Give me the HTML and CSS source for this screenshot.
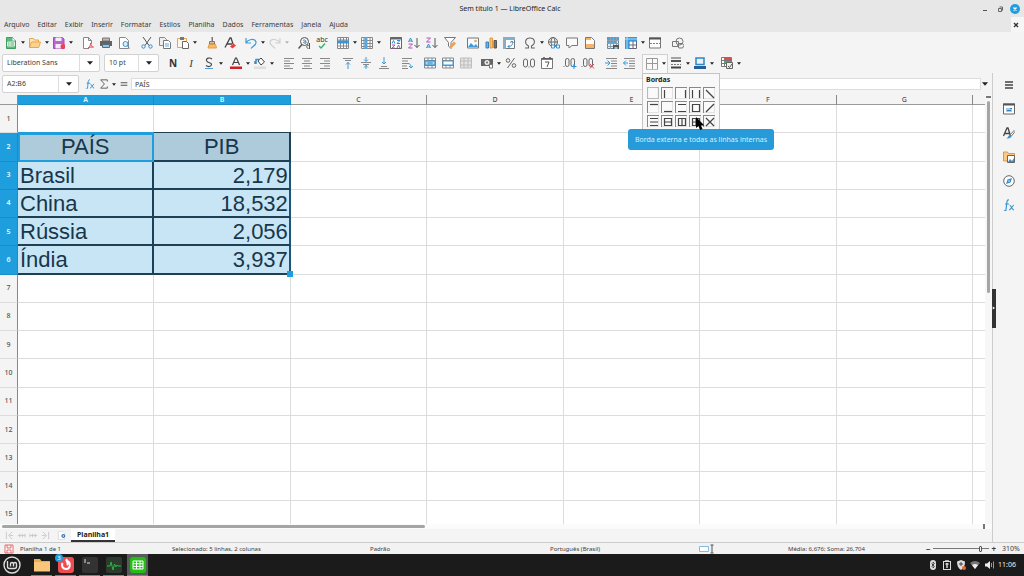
FILE: index.html
```html
<!DOCTYPE html>
<html lang="pt-BR">
<head>
<meta charset="utf-8">
<title>Sem título 1 — LibreOffice Calc</title>
<link rel="stylesheet" href="styles.css">
</head>
<body>
<svg class="sprite" aria-hidden="true">
  <symbol id="new" viewBox="0 0 12 12"><path d="M1.500.5h6l3 3v8h-9z" fill="#5fb97c" stroke="#3f9e60"/><path d="M7.500.5v3h3z" fill="#fff"/><path d="M2.500 5h7v4h-7zM2.500 7h7M5 5v4" fill="#5fb97c" stroke="#d9f2e1"/></symbol>
  <symbol id="open" viewBox="0 0 12 12"><path d="M.5 10.500v-9h4l1 1.500h4v2" fill="#fbe3b8" stroke="#e7a64a"/><path d="M.5 10.500 2.500 5h9l-1.800 5.500z" fill="#fbd38d" stroke="#eba750"/></symbol>
  <symbol id="save" viewBox="0 0 12 12"><path d="M.5.5h9l1.500 1.500v9.500H.5z" fill="#b867cd" stroke="#9b51b5"/><path d="M2.500.5h6v3.500h-6zM2.500 7h6v4.500h-6z" fill="#f5eaf8"/><circle cx="10" cy="9.500" r="2.500" fill="#ec4358"/></symbol>
  <symbol id="pdf" viewBox="0 0 12 12"><path d="M7 11.500H1.500V.5h5l3 3V7M6.500.5v3h3" fill="#fff" stroke="#888"/><path d="M6 11c2-1 2.500-3 2.500-5 .5 3 1.500 4 3 4-2 0-3.500 0-5.500 1z" fill="none" stroke="#e5484d"/></symbol>
  <symbol id="print" viewBox="0 0 12 12"><path d="M2.500 1h7v3h-7z" fill="#b8b8b8" stroke="#777"/><path d="M0 4h12v5H0z" fill="#636363"/><path d="M2.500 7.500h7v3h-7z" fill="#8ec8ee" stroke="#5d6c77"/></symbol>
  <symbol id="preview" viewBox="0 0 12 12"><path d="M1.500 11.500V.5h6l3 3v8z" fill="#fff" stroke="#888"/><circle cx="7.500" cy="7" r="2.500" fill="#dceefb" stroke="#3e94d1"/><path d="m9.500 9 2 2.500" stroke="#3e94d1"/></symbol>
  <symbol id="cut" viewBox="0 0 12 12" fill="none"><path d="m2 0 6 8.500M10 0 4 8.500" stroke="#555"/><circle cx="2.500" cy="9.500" r="1.700" stroke="#338bcf"/><circle cx="9.500" cy="9.500" r="1.700" stroke="#338bcf"/></symbol>
  <symbol id="copy" viewBox="0 0 12 12"><path d="M.5.5h5l2 2v6h-7z" fill="#eee" stroke="#888"/><path d="M4.500 3.500h5l2 2v6h-7z" fill="#fff" stroke="#777"/><path d="M6 7h4M6 9h4" stroke="#5ba9df"/></symbol>
  <symbol id="paste" viewBox="0 0 12 12"><path d="M.5 1.500h9v9h-9z" fill="#fff7e9" stroke="#e3a45b"/><path d="M3 0h4v3H3z" fill="#777"/><path d="M5.500 4.500h4l2 2v5h-6z" fill="#fff" stroke="#666"/></symbol>
  <symbol id="clone" viewBox="0 0 12 12"><path d="M5.500 0h1.500v4H5.500z" fill="#777"/><path d="M3.500 4.500h5V7h-5z" fill="#d8c0a2" stroke="#8d7760"/><path d="M3 7.500h6.500l1 3.500H2z" fill="#f9bd68" stroke="#e59a43"/></symbol>
  <symbol id="clear" viewBox="0 0 12 12"><path d="M1 10.500 6 1h1l2 6M3 7h5" fill="none" stroke="#444" stroke-width="1.300"/><path d="m6 9.500 3.500-3 2.500 2-3.500 3z" fill="#ec3d3d"/></symbol>
  <symbol id="undo" viewBox="0 0 12 12"><path d="M1 1v5h5M1 6c2-4 9-5 10-1 .5 3-3 4-5 6.500" fill="none" stroke="#409bd9" stroke-width="1.200"/></symbol>
  <symbol id="redo" viewBox="0 0 12 12"><path d="M11 1v5H6M11 6C9 2 2 1 1 5c-.5 3 3 4 5 6.500" fill="none" stroke="#d0d0d0" stroke-width="1.200"/></symbol>
  <symbol id="find" viewBox="0 0 12 12" fill="none"><circle cx="6.500" cy="4.500" r="4" stroke="#555"/><path d="M4 7.500.5 11.500" stroke="#555" stroke-width="1.500"/><path d="M5 3.500c2-1 3-.5 3 2.500-2 1-4-1-.5-1.500" stroke="#3c83bb"/><path d="M11.500 6v6M11.500 8.500c-3-1-4 2.500-1 3" stroke="#555"/></symbol>
  <symbol id="rowi" viewBox="0 0 12 12"><path d="M.5.5h11v11H.5zM.5 3h11M.5 9h11M3.500.5v11M6.500.5v11M9.500.5v11" fill="#fff" stroke="#888"/><path d="M0 3.500h12v3H0z" fill="#3d93d3"/></symbol>
  <symbol id="coli" viewBox="0 0 12 12"><path d="M.5.5h11v11H.5zM.5 3.500h11M.5 6.500h11M.5 9.500h11M3 .5v11M9 .5v11" fill="#fff" stroke="#888"/><path d="M3.500 0h3v12h-3z" fill="#57a8df"/></symbol>
  <symbol id="sort" viewBox="0 0 12 12"><path d="M.5.500h11v11H.5z" fill="#fff" stroke="#666"/><path d="M.5 1.500h11" stroke="#666" stroke-width="2"/><g fill="none"><path d="m2 6.500 1.500-3L5 6.500M7 3.500h3l-3 3h3" stroke="#368ed1"/><path d="M2 8h3l-3 3h3" stroke="#ac55b5"/><path d="m7 11 1.500-3 1.500 3" stroke="#ac55b5"/></g></symbol>
  <symbol id="az" viewBox="0 0 12 12" fill="none"><path d="M.5 5 2.500 1l2 4M1 4h3" stroke="#368ed1"/><path d="M.5 7h4l-4 4h4" stroke="#b653bd"/><path d="M9 1v9.500M6.500 8 9 10.500 11.500 8" stroke="#555"/></symbol>
  <symbol id="za" viewBox="0 0 12 12" fill="none"><path d="M.5 1h4l-4 4h4" stroke="#b653bd"/><path d="m.5 11 2-4 2 4M1 10h3" stroke="#368ed1"/><path d="M9 1v9.500M6.500 8 9 10.500 11.500 8" stroke="#555"/></symbol>
  <symbol id="filter" viewBox="0 0 12 12"><path d="M.5.5h11L7 5.500v6L4.500 9V5.500z" fill="#fff" stroke="#777"/><path d="m6 11 .5-3L10 4.500l2 2L8.500 10z" fill="#f2a04e"/></symbol>
  <symbol id="image" viewBox="0 0 12 12"><path d="M.5 1h11v10H.5z" fill="#f4faff" stroke="#777"/><circle cx="8.500" cy="4" r="1.300" fill="#efa352"/><path d="m1 10 3-4 3 3 2-2 2 3z" fill="#409bdc"/></symbol>
  <symbol id="chart" viewBox="0 0 12 12"><path d="M1 5h2.500v6H1z" fill="#65b3e8" stroke="#3686bd"/><path d="M5 1h2.500v10H5z" fill="#fbc16e" stroke="#e5993a"/><path d="M9 3.500h2.500V11H9z" fill="#777" stroke="#555"/></symbol>
  <symbol id="pivot" viewBox="0 0 12 12"><path d="M.5.5h11v11H.5z" fill="#fff" stroke="#777"/><path d="M0 0h12v3H0zM0 3h3v9H0z" fill="#87adc7"/><path d="M5 9.500c4 0 5-2 4-5M7 5.500 9 4l1.500 2M6.500 8 5 9.500 6.500 11" fill="none" stroke="#338ace"/></symbol>
  <symbol id="omega" viewBox="0 0 12 12"><path d="M1 11h3.500V9C-.5 6 1.500 1 6 1s6.500 5 1.500 8v2H11" fill="none" stroke="#666" stroke-width="1.100"/></symbol>
  <symbol id="link" viewBox="0 0 12 12" fill="none"><circle cx="5" cy="5" r="4.500" stroke="#666"/><ellipse cx="5" cy="5" rx="2" ry="4.500" stroke="#666"/><path d="M.5 5h9" stroke="#666"/><path d="M3.500 8h3v3h-3zM8.500 8h3v3h-3zM6 9.500h3" fill="#f4f4f4" stroke="#3994d7"/></symbol>
  <symbol id="comment" viewBox="0 0 12 12"><path d="M.5 1h11v7.500H6L3 11V8.500H.5z" fill="#fafafa" stroke="#777"/></symbol>
  <symbol id="header" viewBox="0 0 12 12"><path d="M1.500.5h6l3 3v8h-9z" fill="#fff" stroke="#777"/><path d="M2 1h5v2H2zM2 7h8v4H2z" fill="#f5b469"/></symbol>
  <symbol id="area" viewBox="0 0 12 12"><path d="M.5.5h11v11H.5z" fill="#e5eef4" stroke="#70808c"/><path d="M0 0h12v3H0zM0 3h9v4H0z" fill="#4f9fd8"/><path d="M0 3.500h12M0 6.500h12M0 9.500h12M3.500 0v12M6.500 0v12M9.500 0v12" stroke="#8fa0ad"/><path d="M6 8h6v4H6z" fill="#555"/><path d="M7.500 10h3v2h-3z" fill="#9cc7e3"/></symbol>
  <symbol id="freeze" viewBox="0 0 12 12"><path d="M.5.5h11v11H.5zM.5 4h11M.5 8h11M4 .5v11M8 .5v11" fill="#fff" stroke="#667"/><path d="M0 0h12v4H4v8H0z" fill="#3f96d5"/><path d="M0 2h12M2 0v12" stroke="#ace0ff"/></symbol>
  <symbol id="split" viewBox="0 0 12 12"><path d="M.5 1h11v10H.5z" fill="#fff" stroke="#777"/><path d="M0 1.500h12" stroke="#555" stroke-width="2"/><path d="M1 6.500h10" stroke="#3594dc" stroke-dasharray="2 1"/></symbol>
  <symbol id="shapes" viewBox="0 0 12 12" fill="none" stroke="#777"><circle cx="7.500" cy="4.500" r="3.500"/><path d="M.5 4.500h6v5h-6z"/><path d="m7 6.500 3.500 0 1.500 2-1.500 2.500H7L5.500 8.500z"/></symbol>

  <symbol id="strike" viewBox="0 0 12 12"><path d="M9 2C7 .5 3 .5 3.500 3.500S9 5 8.500 7.500 5 10 3 8.500" fill="none" stroke="#444" stroke-width="1.200"/><path d="M2 11.500h8" stroke="#4a9dda"/></symbol>
  <symbol id="fontcolor" viewBox="0 0 12 12"><path d="m2.500 8 3-7h1l3 7M4 5.500h4" fill="none" stroke="#444" stroke-width="1.200"/><path d="M0 9.500h12V12H0z" fill="#cf2027"/></symbol>
  <symbol id="fill" viewBox="0 0 12 12"><path d="m4 4 3-3 3.500 4L7 8z" fill="#fff" stroke="#444"/><path d="M2 7V2.500h4M1 7V4" fill="none" stroke="#3a8dcb" stroke-width="1.500"/><path d="M0 9.500h12V12H0z" fill="#dedede"/></symbol>
  <symbol id="left" viewBox="0 0 12 12"><path d="M1 1.500h10M1 4h6M1 6.500h10M1 9h6M1 11.500h9" stroke="#888"/></symbol>
  <symbol id="center" viewBox="0 0 12 12"><path d="M1 1.500h10M3 4h6M1 6.500h10M3 9h6M1 11.500h10" stroke="#888"/></symbol>
  <symbol id="right" viewBox="0 0 12 12"><path d="M1 1.500h10M5 4h6M1 6.500h10M5 9h6M1 11.500h10" stroke="#888"/></symbol>
  <symbol id="top" viewBox="0 0 12 12" fill="none"><path d="M1 1.500h10M3 3.500h6" stroke="#888"/><path d="M6 12V5M4 7.500 6 5.500l2 2" stroke="#389ada"/></symbol>
  <symbol id="middle" viewBox="0 0 12 12" fill="none"><path d="M1 5.500h10M3 7.500h6" stroke="#888"/><path d="M6 0v4M4 2.500l2 2 2-2M6 12V8M4 10.500l2-2 2 2" stroke="#389ada"/></symbol>
  <symbol id="bottom" viewBox="0 0 12 12" fill="none"><path d="M1 11.500h10M3 9.500h6" stroke="#888"/><path d="M6 0v7M4 5l2 2 2-2" stroke="#389ada"/></symbol>
  <symbol id="wrap" viewBox="0 0 12 12" fill="none"><path d="M1 1.500h10M1 4h6M1 9h5M1 11.500h6" stroke="#888"/><path d="M1 6.500h6c2 0 3 1 3 4M8 9l2 2 2-2" stroke="#4199d2"/></symbol>
  <symbol id="merge" viewBox="0 0 12 12"><path d="M.5 1h11v10H.5zM.5 3.500h11M.5 8.500h11M4 1v10M8 1v10" fill="#fff" stroke="#808a92"/><path d="M1 4h10v4H1z" fill="#a8dcfb" stroke="#3990cb"/><path d="M3 6h6M5 4.500v3M7 4.500v3" stroke="#5ba3d3"/></symbol>
  <symbol id="mergec" viewBox="0 0 12 12"><path d="M.5 1h11v10H.5zM.5 3.500h11M.5 8.500h11M4 1v10M8 1v10" fill="#fff" stroke="#888"/><path d="M1 4h10v4H1z" fill="#fff" stroke="#409bda"/></symbol>
  <symbol id="unmerge" viewBox="0 0 12 12"><path d="M.5 1h11v10H.5zM.5 4h11M.5 8h11M4 1v10M8 1v10" fill="#e4e4e4" stroke="#bdbdbd"/></symbol>
  <symbol id="money" viewBox="0 0 12 12"><path d="M0 2h12v7H0z" fill="#666"/><circle cx="6" cy="5.500" r="2.500" fill="#eee"/><circle cx="6" cy="5.500" r="1" fill="#666"/><path d="M8.500 7.500h3v3.500h-3z" fill="#fff" stroke="#777"/></symbol>
  <symbol id="percent" viewBox="0 0 12 12" fill="none" stroke="#666"><circle cx="3" cy="3.500" r="1.800"/><circle cx="9" cy="8.500" r="1.800"/><path d="M9.500 1 2.500 11"/></symbol>
  <symbol id="number" viewBox="0 0 12 12" fill="none" stroke="#666"><rect x=".5" y="2" width="4" height="8" rx="2"/><rect x="7.500" y="2" width="4" height="8" rx="2"/><path d="M5.500 10h1"/></symbol>
  <symbol id="date" viewBox="0 0 12 12"><path d="M.5 1.500h11v10H.5z" fill="#fff" stroke="#777"/><path d="M.5 2h11M3 0v2M9 0v2" stroke="#555" stroke-width="1.500"/><path d="M4 5h4L6 10" fill="none" stroke="#555"/></symbol>
  <symbol id="adddec" viewBox="0 0 14 12" fill="none"><g stroke="#666"><path d="M.5 9.500h1"/><rect x="2.500" y="1.500" width="3.500" height="8" rx="1.700"/><rect x="8" y="1.500" width="3.500" height="8" rx="1.700"/></g><path d="M8.500 9.500h5M11 7v5" stroke="#298fda"/></symbol>
  <symbol id="deldec" viewBox="0 0 14 12" fill="none"><g stroke="#666"><path d="M.5 9.500h1"/><rect x="2.500" y="1.500" width="3.500" height="8" rx="1.700"/><rect x="8" y="1.500" width="3.500" height="8" rx="1.700"/></g><path d="m9 7 4 4.500m0-4.500-4 4.500" stroke="#e83f4c"/></symbol>
  <symbol id="indent" viewBox="0 0 12 12" fill="none"><path d="M1 1.500h11M6 4h6M6 6.500h6M6 9h6M1 11.500h11" stroke="#888"/><path d="M0 6h4.500M2.500 3.500 5 6 2.500 8.500" stroke="#3598dc"/></symbol>
  <symbol id="outdent" viewBox="0 0 12 12" fill="none"><path d="M1 1.500h11M6 4h6M6 6.500h6M6 9h6M1 11.500h11" stroke="#888"/><path d="M5 6H.5M3 3.500.5 6 3 8.500" stroke="#3598dc"/></symbol>
  <symbol id="borders" viewBox="0 0 12 12" fill="none"><path d="M.5 11V.5h11V11M6.500 1v10M.5 5.500h11" stroke="#999"/><path d="M0 11.500h12" stroke="#f3ad69"/></symbol>
  <symbol id="style" viewBox="0 0 12 12"><path d="M1 1h10" stroke="#555"/><path d="M1 4h10" stroke="#555" stroke-width="2"/><path d="M1 7.500h10" stroke="#777" stroke-dasharray="2 1"/><path d="M1 10.500h10" stroke="#444" stroke-width="2"/></symbol>
  <symbol id="linecolor" viewBox="0 0 12 12"><path d="M2 1h8v6.500H2z" fill="#e7f4fd" stroke="#2e85c3" stroke-width="1.500"/><path d="M0 9h12v3H0z" fill="#245f98"/></symbol>
  <symbol id="cond" viewBox="0 0 12 12"><path d="M.5.5h10v9H.5zM.5 3.500h10M.5 6.500h10M3.500.5v9" fill="#fff" stroke="#777"/><path d="M3 1h7v2H3z" fill="#df4c4c"/><path d="M3 4h7v2H3z" fill="#3ead6e"/><path d="M5.500 5.500h6v6h-6z" fill="#eee" stroke="#666"/><path d="m7 9 1.500 1.500L11 7" fill="none" stroke="#555"/></symbol>

  <symbol id="tri" viewBox="0 0 6 4"><path d="M0 .3h6L3 3.800z" fill="#222"/></symbol>
  <symbol id="fx" viewBox="0 0 12 12"><path d="M6 1C3.500.5 4 3 3 11c-.3 1-1.500 1-2 .5M2 5h4M6.500 6c1.500 0 2.500 5 4.500 5M11 6c-1.500 0-3 5-5 5" fill="none" stroke="#3d96d4" stroke-width="1.200"/></symbol>
  <symbol id="sum" viewBox="0 0 12 12"><path d="M10 3V1H2l4.500 5L2 11h8V9" fill="none" stroke="#666" stroke-width="1.200"/></symbol>
  <symbol id="props" viewBox="0 0 12 12"><path d="M.5 1h11v10H.5z" fill="#fff" stroke="#666"/><path d="M0 1.500h12" stroke="#555" stroke-width="2"/><path d="M3 5h6v4H3z" fill="#a4ccea"/><path d="M4 7.500h4M7 5.500h2" stroke="#357eb5"/></symbol>
  <symbol id="styles" viewBox="0 0 12 12"><path d="M.5 9 4 1h1l2.500 8M2 6.500h4.500" fill="none" stroke="#444" stroke-width="1.300"/><path d="m7 8 4-4.500 1 1L8.500 9z" fill="#fff" stroke="#777"/><path d="M3 11.500c2 0 2-3 4-3.500l1.500 1.500c-1 2-3 2-5.500 2z" fill="#368fd0"/></symbol>
  <symbol id="gallery" viewBox="0 0 12 12"><path d="M.5 10V1h4l1 1.500h6V10z" fill="#fbc987" stroke="#e39743"/><path d="M4.500 4.500h7v7h-7z" fill="#fff" stroke="#666"/><path d="m5 11 2-3 2 2 2-3v4z" fill="#3690d1"/></symbol>
  <symbol id="compass" viewBox="0 0 12 12"><circle cx="6" cy="6" r="5.300" fill="#fff" stroke="#666"/><path d="m3 9 1.500-4.500L9 3 7.500 7.500z" fill="#338fd3"/><circle cx="6" cy="6" r=".7" fill="#fff"/></symbol>
  <symbol id="menu" viewBox="0 0 12 12"><path d="M2 3h8M2 6h8M2 9h8" stroke="#444" stroke-width="1.500"/></symbol>
</svg>

<header class="titlebar">
  <h1 class="title">Sem título 1 — LibreOffice Calc</h1>
  <div class="window-buttons">
    <button class="win" aria-label="Minimizar"><svg viewBox="0 0 10 10"><path d="M3 6.500h4" stroke="#555"/></svg></button>
    <button class="win" aria-label="Restaurar"><svg viewBox="0 0 10 10"><path d="M3.500 4.500h3v3h-3zM4.500 3h3v3.500" fill="none" stroke="#666"/></svg></button>
    <button class="win" aria-label="Fechar"><svg viewBox="0 0 10 10"><circle cx="5" cy="5" r="5" fill="#1f9ede"/><path d="m3.500 3.500 3 3m0-3-3 3" stroke="#fff" stroke-width="1.400"/></svg></button>
  </div>
</header>
<nav class="menubar">
  <button>Arquivo</button><button>Editar</button><button>Exibir</button><button>Inserir</button><button>Formatar</button><button>Estilos</button><button>Planilha</button><button>Dados</button><button>Ferramentas</button><button>Janela</button><button>Ajuda</button>
  <button class="doc-close" aria-label="Fechar documento"><svg viewBox="0 0 6 6"><path d="m1 1 4 4m0-4L1 5" stroke="#333" stroke-width="1.400"/></svg></button>
</nav>

<div class="toolbar standard">
  <button class="tool" aria-label="Novo"><svg><use href="#new"/></svg></button><button class="drop" aria-label="Mais"><svg><use href="#tri"/></svg></button>
  <button class="tool" aria-label="Abrir"><svg><use href="#open"/></svg></button><button class="drop" aria-label="Mais"><svg><use href="#tri"/></svg></button>
  <button class="tool" aria-label="Salvar"><svg><use href="#save"/></svg></button><button class="drop" aria-label="Mais"><svg><use href="#tri"/></svg></button>
  <i class="sep"></i>
  <button class="tool" aria-label="PDF"><svg><use href="#pdf"/></svg></button>
  <button class="tool" aria-label="Imprimir"><svg><use href="#print"/></svg></button>
  <button class="tool" aria-label="Visualizar"><svg><use href="#preview"/></svg></button>
  <i class="sep"></i>
  <button class="tool" aria-label="Cortar"><svg><use href="#cut"/></svg></button>
  <button class="tool" aria-label="Copiar"><svg><use href="#copy"/></svg></button>
  <button class="tool" aria-label="Colar"><svg><use href="#paste"/></svg></button><button class="drop" aria-label="Mais"><svg><use href="#tri"/></svg></button>
  <i class="sep"></i>
  <button class="tool" aria-label="Clonar"><svg><use href="#clone"/></svg></button>
  <button class="tool" aria-label="Limpar"><svg><use href="#clear"/></svg></button>
  <i class="sep small"></i>
  <button class="tool" aria-label="Desfazer"><svg><use href="#undo"/></svg></button><button class="drop" aria-label="Mais"><svg><use href="#tri"/></svg></button>
  <button class="tool" aria-label="Refazer"><svg><use href="#redo"/></svg></button><button class="drop faded" aria-label="Mais"><svg><use href="#tri"/></svg></button>
  <i class="sep"></i>
  <button class="tool" aria-label="Localizar"><svg><use href="#find"/></svg></button>
  <button class="tool spell" aria-label="Ortografia"><span>abc</span><svg viewBox="0 0 8 6"><path d="m1 3 2 2 4-4.500" fill="none" stroke="#38b567" stroke-width="1.400"/></svg></button>
  <i class="sep small"></i>
  <button class="tool" aria-label="Linha"><svg><use href="#rowi"/></svg></button><button class="drop" aria-label="Mais"><svg><use href="#tri"/></svg></button>
  <button class="tool" aria-label="Coluna"><svg><use href="#coli"/></svg></button><button class="drop" aria-label="Mais"><svg><use href="#tri"/></svg></button>
  <i class="sep"></i>
  <button class="tool" aria-label="Ordenar"><svg><use href="#sort"/></svg></button>
  <button class="tool" aria-label="Crescente"><svg><use href="#az"/></svg></button>
  <button class="tool" aria-label="Decrescente"><svg><use href="#za"/></svg></button>
  <button class="tool" aria-label="Filtro"><svg><use href="#filter"/></svg></button>
  <i class="sep"></i>
  <button class="tool" aria-label="Imagem"><svg><use href="#image"/></svg></button>
  <button class="tool" aria-label="Gráfico"><svg><use href="#chart"/></svg></button>
  <button class="tool" aria-label="Tabela dinâmica"><svg><use href="#pivot"/></svg></button>
  <i class="sep small"></i>
  <button class="tool" aria-label="Símbolo"><svg><use href="#omega"/></svg></button><button class="drop" aria-label="Mais"><svg><use href="#tri"/></svg></button>
  <button class="tool" aria-label="Hiperlink"><svg><use href="#link"/></svg></button>
  <button class="tool" aria-label="Comentário"><svg><use href="#comment"/></svg></button>
  <button class="tool" aria-label="Cabeçalho"><svg><use href="#header"/></svg></button>
  <i class="sep"></i>
  <button class="tool" aria-label="Área de impressão"><svg><use href="#area"/></svg></button>
  <button class="tool" aria-label="Fixar"><svg><use href="#freeze"/></svg></button><button class="drop" aria-label="Mais"><svg><use href="#tri"/></svg></button>
  <button class="tool" aria-label="Dividir"><svg><use href="#split"/></svg></button>
  <i class="sep"></i>
  <button class="tool" aria-label="Formas"><svg><use href="#shapes"/></svg></button>
</div>

<div class="toolbar">
  <div class="combo font-name"><input aria-label="Nome da fonte" value="Liberation Sans"><button aria-label="Abrir lista"><svg><use href="#tri"/></svg></button></div>
  <div class="combo font-size"><input aria-label="Tamanho da fonte" value="10 pt"><button aria-label="Abrir lista"><svg><use href="#tri"/></svg></button></div>
  <i class="sep"></i>
  <button class="tool bold">N</button>
  <button class="tool italic">I</button>
  <button class="tool" aria-label="Sublinhado"><svg><use href="#strike"/></svg></button><button class="drop" aria-label="Mais"><svg><use href="#tri"/></svg></button>
  <i class="sep small"></i>
  <button class="tool" aria-label="Cor da fonte"><svg><use href="#fontcolor"/></svg></button><button class="drop" aria-label="Mais"><svg><use href="#tri"/></svg></button>
  <button class="tool" aria-label="Cor de fundo"><svg><use href="#fill"/></svg></button><button class="drop" aria-label="Mais"><svg><use href="#tri"/></svg></button>
  <i class="sep"></i>
  <button class="tool" aria-label="Esquerda"><svg><use href="#left"/></svg></button>
  <button class="tool" aria-label="Centro"><svg><use href="#center"/></svg></button>
  <button class="tool" aria-label="Direita"><svg><use href="#right"/></svg></button>
  <i class="sep"></i>
  <button class="tool" aria-label="Em cima"><svg><use href="#top"/></svg></button>
  <button class="tool" aria-label="No meio"><svg><use href="#middle"/></svg></button>
  <button class="tool" aria-label="Embaixo"><svg><use href="#bottom"/></svg></button>
  <i class="sep"></i>
  <button class="tool" aria-label="Quebrar texto"><svg><use href="#wrap"/></svg></button>
  <i class="sep"></i>
  <button class="tool" aria-label="Mesclar e centralizar"><svg><use href="#merge"/></svg></button>
  <button class="tool" aria-label="Mesclar"><svg><use href="#mergec"/></svg></button>
  <button class="tool" aria-label="Desfazer mescla"><svg><use href="#unmerge"/></svg></button>
  <i class="sep small"></i>
  <button class="tool" aria-label="Moeda"><svg><use href="#money"/></svg></button><button class="drop" aria-label="Mais"><svg><use href="#tri"/></svg></button>
  <button class="tool" aria-label="Porcentagem"><svg><use href="#percent"/></svg></button>
  <button class="tool" aria-label="Número"><svg><use href="#number"/></svg></button>
  <button class="tool" aria-label="Data"><svg><use href="#date"/></svg></button>
  <i class="sep"></i>
  <button class="tool wide" aria-label="Adicionar casa decimal"><svg><use href="#adddec"/></svg></button>
  <button class="tool wide" aria-label="Excluir casa decimal"><svg><use href="#deldec"/></svg></button>
  <i class="sep"></i>
  <button class="tool" aria-label="Aumentar recuo"><svg><use href="#indent"/></svg></button>
  <button class="tool" aria-label="Diminuir recuo"><svg><use href="#outdent"/></svg></button>
  <i class="sep"></i>
  <div class="border-control">
    <button class="tool" aria-label="Bordas"><svg><use href="#borders"/></svg></button><button class="drop" aria-label="Mais"><svg><use href="#tri"/></svg></button>
    <section class="popup">
      <h2 class="popup-title">Bordas</h2>
      <div class="presets">
        <button aria-label="Sem bordas"><svg viewBox="0 0 12 12"><path d="M.5.5h11v11H.5z" stroke-dasharray="1 1" stroke="#777"/></svg></button>
        <button class="bev" aria-label="Esquerda"><svg viewBox="0 0 12 12"><path d="M3.500 3v8"/></svg></button>
        <button class="bev" aria-label="Direita"><svg viewBox="0 0 12 12"><path d="M10.500 3v8"/></svg></button>
        <button class="bev" aria-label="Esquerda e direita"><svg viewBox="0 0 12 12"><path d="M3.500 3v8M10.500 3v8"/></svg></button>
        <button class="bev" aria-label="Diagonal para baixo"><svg viewBox="0 0 12 12"><path d="m3 3 8 8"/></svg></button>
        <button class="bev" aria-label="Superior"><svg viewBox="0 0 12 12"><path d="M3 3.500h8"/></svg></button>
        <button class="bev" aria-label="Inferior"><svg viewBox="0 0 12 12"><path d="M3 10.500h8"/></svg></button>
        <button class="bev" aria-label="Superior e inferior"><svg viewBox="0 0 12 12"><path d="M3 3.500h8M3 10.500h8"/></svg></button>
        <button class="bev" aria-label="Externa"><svg viewBox="0 0 12 12"><path d="M3.500 3.500h7v7h-7z"/></svg></button>
        <button class="bev" aria-label="Diagonal para cima"><svg viewBox="0 0 12 12"><path d="m3 11 8-8"/></svg></button>
        <button class="bev" aria-label="Horizontais"><svg viewBox="0 0 12 12"><path d="M3 3.500h8M3 7h8M3 10.500h8"/></svg></button>
        <button class="bev" aria-label="Externa e horizontais"><svg viewBox="0 0 12 12"><path d="M3.500 3.500h7v7h-7zM3 7h8"/></svg></button>
        <button class="bev" aria-label="Externa e verticais"><svg viewBox="0 0 12 12"><path d="M3.500 3.500h7v7h-7zM7 3v8"/></svg></button>
        <button class="bev" aria-label="Externa e internas"><svg viewBox="0 0 12 12"><path d="M3.500 3.500h7v7h-7zM7 3v8M3 7h8"/></svg></button>
        <button class="bev" aria-label="Cruzada"><svg viewBox="0 0 12 12"><path d="m3 3 8 8M3 11l8-8"/></svg></button>
      </div>
      <svg class="pointer" viewBox="0 0 10 14"><path d="M1 0v11l2.500-2L5 13l2.500-1L6 8.500h3.500z" fill="#000"/></svg>
      <div class="tooltip" role="tooltip">Borda externa e todas as linhas internas</div>
    </section>
  </div>
  <button class="tool" aria-label="Estilo da borda"><svg><use href="#style"/></svg></button><button class="drop" aria-label="Mais"><svg><use href="#tri"/></svg></button>
  <button class="tool" aria-label="Cor da borda"><svg><use href="#linecolor"/></svg></button><button class="drop" aria-label="Mais"><svg><use href="#tri"/></svg></button>
  <i class="sep small"></i>
  <button class="tool" aria-label="Condicional"><svg><use href="#cond"/></svg></button><button class="drop" aria-label="Mais"><svg><use href="#tri"/></svg></button>
</div>

<main class="workspace">
  <div class="document">
    <div class="formula-bar">
      <div class="combo name-box"><input aria-label="Caixa de nome" value="A2:B6"><button aria-label="Abrir lista"><svg><use href="#tri"/></svg></button></div>
      <button class="func" aria-label="Assistente de funções"><svg><use href="#fx"/></svg></button>
      <button class="func" aria-label="Soma"><svg><use href="#sum"/></svg></button><button class="drop" aria-label="Mais"><svg><use href="#tri"/></svg></button>
      <button class="func" aria-label="Fórmula"><svg viewBox="0 0 12 12"><path d="M2 4.500h8M2 7.500h8" stroke="#555" stroke-width="1.200"/></svg></button>
      <input class="formula" aria-label="Conteúdo" value="PAÍS">
      <button class="drop expand" aria-label="Expandir"><svg><use href="#tri"/></svg></button>
    </div>
    <div class="sheet-area">
      <div class="sheet-view">
        <table class="sheet">
          <thead><tr><th class="corner"></th><th class="on">A</th><th class="on">B</th><th>C</th><th>D</th><th>E</th><th>F</th><th>G</th><th></th></tr></thead>
          <tbody>
            <tr><th>1</th><td></td><td></td><td></td><td></td><td></td><td></td><td></td><td></td></tr>
            <tr><th class="on">2</th><td class="sel head active">PAÍS</td><td class="sel head">PIB</td><td></td><td></td><td></td><td></td><td></td><td></td></tr>
            <tr><th class="on">3</th><td class="sel">Brasil</td><td class="sel num">2,179</td><td></td><td></td><td></td><td></td><td></td><td></td></tr>
            <tr><th class="on">4</th><td class="sel">China</td><td class="sel num">18,532</td><td></td><td></td><td></td><td></td><td></td><td></td></tr>
            <tr><th class="on">5</th><td class="sel">Rússia</td><td class="sel num">2,056</td><td></td><td></td><td></td><td></td><td></td><td></td></tr>
            <tr><th class="on">6</th><td class="sel">Índia</td><td class="sel num last">3,937</td><td></td><td></td><td></td><td></td><td></td><td></td></tr>
            <tr><th>7</th><td></td><td></td><td></td><td></td><td></td><td></td><td></td><td></td></tr>
            <tr><th>8</th><td></td><td></td><td></td><td></td><td></td><td></td><td></td><td></td></tr>
            <tr><th>9</th><td></td><td></td><td></td><td></td><td></td><td></td><td></td><td></td></tr>
            <tr><th>10</th><td></td><td></td><td></td><td></td><td></td><td></td><td></td><td></td></tr>
            <tr><th>11</th><td></td><td></td><td></td><td></td><td></td><td></td><td></td><td></td></tr>
            <tr><th>12</th><td></td><td></td><td></td><td></td><td></td><td></td><td></td><td></td></tr>
            <tr><th>13</th><td></td><td></td><td></td><td></td><td></td><td></td><td></td><td></td></tr>
            <tr><th>14</th><td></td><td></td><td></td><td></td><td></td><td></td><td></td><td></td></tr>
            <tr><th>15</th><td></td><td></td><td></td><td></td><td></td><td></td><td></td><td></td></tr>
          </tbody>
        </table>
      </div>
      <div class="vscroll"><i class="split-grip"></i><i class="vthumb"></i></div>
    </div>
    <div class="hscroll"><i class="hthumb"></i><i class="hgrip"></i></div>
    <div class="tabs">
      <button class="tabnav" aria-label="Primeira"><svg viewBox="0 0 10 10"><path d="M1.500 1v8M8 1 4 5l4 4M5 5h4" /></svg></button>
      <button class="tabnav" aria-label="Anterior"><svg viewBox="0 0 10 10"><path d="M1 5h8M3 3v4M6 3v4M9 3v4"/></svg></button>
      <button class="tabnav" aria-label="Próxima"><svg viewBox="0 0 10 10"><path d="M1 5h8M1 3v4M4 3v4M7 3v4"/></svg></button>
      <button class="tabnav" aria-label="Última"><svg viewBox="0 0 10 10"><path d="M8.500 1v8M2 1l4 4-4 4M1 5h4"/></svg></button>
      <button class="addtab" aria-label="Adicionar planilha"><svg viewBox="0 0 10 10"><path d="M1.500.5h5l2 2v7h-7z" fill="#fff" stroke="#ddd"/><circle cx="7" cy="5.500" r="1.500" fill="#fff" stroke="#3474b8" stroke-width="1.300"/></svg></button>
      <button class="tab">Planilha1</button>
    </div>
  </div>
  <aside class="sidebar">
    <button aria-label="Configurações"><svg><use href="#menu"/></svg></button>
    <button aria-label="Propriedades"><svg><use href="#props"/></svg></button>
    <button aria-label="Estilos"><svg><use href="#styles"/></svg></button>
    <button aria-label="Galeria"><svg><use href="#gallery"/></svg></button>
    <button aria-label="Navegador"><svg><use href="#compass"/></svg></button>
    <button aria-label="Funções"><svg><use href="#fx"/></svg></button>
    <button class="side-grip" aria-label="Mostrar painel"><svg viewBox="0 0 4 4"><path d="M1 0v4l3-2z" fill="#fff"/></svg></button>
  </aside>
</main>

<footer class="status">
  <span class="st-save"><svg viewBox="0 0 10 10"><path d="M1 1h8v8H1zM3 1v3h4V1M3 9V6h4v3" fill="#fff" stroke="#e46c6c"/></svg></span>
  <span class="st-sheet">Planilha 1 de 1</span>
  <span class="st-selected">Selecionado: 5 linhas, 2 colunas</span>
  <span class="st-style">Padrão</span>
  <span class="st-lang">Português (Brasil)</span>
  <span class="st-mode"><svg viewBox="0 0 16 10"><path d="M1.500 2.500h9v5h-9z" fill="#fff" stroke="#7dbbe8"/><path d="M12.500 1h3M14 1v8M12.500 9h3" stroke="#555"/></svg></span>
  <span class="st-sum">Média: 6,676; Soma: 26,704</span>
  <span class="st-zoom"><button aria-label="Reduzir">−</button><input type="range" aria-label="Zoom" min="0" max="100" value="86"><button aria-label="Ampliar">+</button></span>
  <span class="st-percent">310%</span>
</footer>

<div class="taskbar">
  <button class="start" aria-label="Menu"><svg viewBox="0 0 18 18" fill="none" stroke="#ddd"><circle cx="9" cy="9" r="8" stroke-width="1.400"/><path d="M4.500 5v5.500q0 2 2 2h5q2 0 2-2V8q0-1.500-1.500-1.500T10.500 8v2.500M10.500 8q0-1.500-1.500-1.500T7.500 8v2.500" stroke-width="1.400"/></svg></button>
  <button class="task" aria-label="Arquivos"><svg viewBox="0 0 16 16"><path d="M0 2h6l1.500 2H16v10H0z" fill="#e9ad58"/><path d="M0 5h16v9.500H0z" fill="#f8c77b"/></svg></button>
  <button class="task" aria-label="Navegador"><svg viewBox="0 0 16 16"><rect width="16" height="16" rx="3" fill="#ee4c50"/><path d="M8 4c5 0 5 8 0 8-3 0-5-3-3.500-6M8 4l1-2M8 4c2 1 2 3 1 4" fill="none" stroke="#fff" stroke-width="2"/></svg><span class="badge">3</span></button>
  <button class="task" aria-label="Terminal"><svg viewBox="0 0 16 16"><rect width="16" height="16" rx="2" fill="#333"/><path d="M2 3h2M2 5h2M5 6h3" stroke="#ddd"/></svg></button>
  <button class="task" aria-label="Monitor"><svg viewBox="0 0 16 16"><rect width="16" height="16" rx="2" fill="#2c3b2d"/><path d="M1 9h3l1-4 2 8 1.500-6L10 10l1-2 1 1h3" fill="none" stroke="#27b842"/></svg></button>
  <button class="task current" aria-label="Calc"><svg viewBox="0 0 16 16"><rect width="16" height="16" rx="3" fill="#24bd16"/><path d="M3 4h10v8H3zM3 6.700h10M3 9.400h10M6.500 4v8M10 4v8" fill="none" stroke="#fff"/></svg></button>
  <div class="tray">
    <svg viewBox="0 0 10 10"><rect x="2" width="6" height="10" rx="3" fill="#ddd"/><path d="m3.500 3.500 3 3L5 8V2l1.500 1.500-3 3" fill="none" stroke="#222" stroke-width=".7"/></svg>
    <svg viewBox="0 0 10 10"><rect x="1.500" y="1.500" width="7" height="8" fill="none" stroke="#ddd"/><path d="M3 1h4M5 3v5M3.500 4h3" stroke="#ddd" stroke-width="1.400"/></svg>
    <svg viewBox="0 0 10 10"><path d="m5 0 4 1.500c0 4-1 6.500-4 8.500-3-2-4-4.500-4-8.500z" fill="#ddd"/><path d="M3 4h4M5 2v4" stroke="#444"/><circle cx="8" cy="8" r="2" fill="#eb6536"/></svg>
    <svg viewBox="0 0 10 10"><path d="M0 3q5-4 10 0L5 9z" fill="#777"/><path d="M2 5q3-2 6 0L5 9z" fill="#eee"/></svg>
    <svg viewBox="0 0 10 10"><path d="M1 3.500h2L6 1v8L3 6.500H1z" fill="#eee"/><path d="M7.500 3v4M9.500 1.500v7" stroke="#999"/></svg>
    <time>11:06</time>
  </div>
</div>
</body>
</html>
```
FILE: styles.css
```css
* { box-sizing: border-box; }
html, body { height: 100%; }
body {
  margin: 0;
  display: flex;
  flex-direction: column;
  overflow: hidden;
  background: #f4f4f4;
  color: #3c3c3c;
  font: 7px/10px "Noto Sans", "Open Sans", sans-serif;
}
button, input { font: inherit; color: inherit; }
button { border: 0; padding: 0; background: none; flex: none; }
svg { display: block; flex: none; }
.sprite { position: absolute; width: 0; height: 0; }

.titlebar {
  display: grid;
  grid-template-columns: 1fr auto 1fr;
  align-items: center;
  height: 17px;
  flex: none;
  padding-right: 4px;
  background: #e7e7e7;
}
.title { grid-column: 2; margin: 0; font-size: 7px; font-weight: 400; color: #222; }
.window-buttons { display: flex; justify-content: flex-end; gap: 5px; }
.win svg { width: 10px; height: 10px; }

.menubar {
  display: flex;
  align-items: center;
  gap: 8px;
  height: 15px;
  flex: none;
  padding-left: 4px;
  background: #e7e7e7;
}
.doc-close { display: grid; place-items: center; width: 13px; height: 15px; margin-left: auto; padding-right: 4px; background: #f6f6f6; }
.doc-close svg { width: 6px; height: 6px; }

.toolbar { display: flex; align-items: center; height: 20px; flex: none; padding-left: 2px; }
.standard { height: 21px; }
.tool { display: grid; place-items: center; width: 18px; height: 18px; }
.tool svg { width: 12px; height: 12px; }
.wide svg { width: 14px; }
.spell { align-content: center; }
.spell span { font-size: 7px; line-height: 7px; color: #333; }
.spell svg { width: 8px; height: 6px; }
.drop { display: grid; place-items: center; width: 6px; height: 18px; }
.drop svg { width: 4px; height: 3px; }
.combo svg, .expand svg { width: 6px; height: 4px; }
.faded { opacity: .3; }
.sep { width: 5px; flex: none; }
.small { width: 3px; }
.bold { font-size: 10px; font-weight: 700; color: #333; }
.italic { font: italic 11px/12px "Liberation Serif", serif; color: #444; }

.combo { display: flex; height: 18px; flex: none; border: 1px solid #d2d2d2; border-radius: 2px; background: #fff; }
.combo input { flex: 1; min-width: 0; border: 0; padding: 0 4px; background: none; }
.combo button { display: grid; place-items: center; width: 20px; border-left: 1px solid #ddd; }
.font-name { width: 98px; margin-right: 4px; }
.font-size { width: 55px; }

.border-control { position: relative; display: flex; border: solid #d0d0d0; border-width: 1px 1px 0; margin: 0 -1px; background: #f9f9f9; }
.popup {
  position: absolute;
  z-index: 2;
  top: 18px;
  left: -1px;
  width: 78px;
  height: 58px;
  padding: 0 3px;
  border: 1px solid #c4c4c4;
  background: #f8f8f8;
}
.popup-title { margin: 0 0 2px; font-size: 7px; line-height: 11px; color: #222; }
.presets { display: grid; grid-template-columns: repeat(5, 12px); gap: 2px; padding-left: 1px; }
.presets svg { width: 12px; height: 12px; fill: none; stroke: #444; stroke-width: 1.2; }
.presets button { background: #fafafa; }
.bev { box-shadow: inset 1px 1px #888, inset -1px -1px #e2e2e2; }
.pointer { position: absolute; left: 52px; top: 43px; width: 10px; height: 14px; z-index: 2; }
.tooltip {
  position: absolute;
  top: 55px;
  left: -15px;
  padding: 5px 7px;
  border-radius: 3px;
  background: #279bd9;
  color: #d5efff;
  line-height: 11px;
  white-space: nowrap;
}

.workspace { display: flex; flex: 1; min-height: 0; }
.document { display: flex; flex-direction: column; flex: 1; min-width: 0; }
.formula-bar { display: flex; align-items: center; height: 22px; flex: none; padding: 0 4px 0 2px; }
.name-box { width: 77px; margin-right: 4px; }
.func { width: 14px; }
.func svg { width: 10px; height: 10px; margin: auto; }
.formula { flex: 1; min-width: 0; height: 12px; padding: 0 3px; border: 1px solid #ddd; background: #fff; margin-right: 1px; }

.sheet-area { display: flex; flex: 1; min-height: 0; background: #fbfbfb; }
.sheet-view { flex: 1; min-width: 0; overflow: hidden; }
.sheet {
  display: grid;
  grid-template-columns: 18px repeat(7, 1fr) 12px;
  grid-template-rows: 10px repeat(15, minmax(0, 1fr));
  height: calc(100% + 5px);
  background: #fff;
}
thead, tbody, tr { display: contents; }
th {
  display: grid;
  place-items: center;
  padding: 0;
  font-size: 7px;
  line-height: 8px;
  font-weight: 500;
  color: #555;
  background: #f4f4f4;
}
thead th { border-bottom: 1px solid #999; border-right: 1px solid #888; }
thead th:last-child { border-right: 0; }
tbody th { border-right: 1px solid #888; border-bottom: 1px solid #ddd; }
thead .on, tbody .on { background: #1f9ede; color: #e8f7ff; border-color: #178dca; font-weight: 600; }
td { min-width: 0; padding: 0; border: solid #dcdcdc; border-width: 0 1px 1px 0; }
td:last-child { border-right: 0; }
.sel {
  position: relative;
  padding: 0 2px;
  border: solid #1d4054;
  border-width: 0 2px 2px 0;
  background: #c7e5f5;
  color: #17364a;
  font: 22px/27px "Liberation Sans", Arial, sans-serif;
  white-space: nowrap;
}
.head { background: #aecbdb; text-align: center; box-shadow: 0 -1px #1d4054; }
.active { border-color: #1f9ede; box-shadow: inset 2px 2px #1f9ede, 0 -1px #1f9ede; }
.num { padding: 0 1px; text-align: right; border-right-color: #1c5577; }
.last::after { content: ""; position: absolute; right: -4px; bottom: -4px; width: 6px; height: 6px; background: #1f9ede; }

.vscroll { display: flex; flex-direction: column; align-items: center; width: 7px; flex: none; padding: 1px 0; gap: 3px; background: #f7f7f7; }
.split-grip { width: 5px; height: 2px; background: #777; }
.vthumb { width: 3px; height: 45%; border-radius: 2px; background: #a5a5a5; }
.hscroll { display: flex; align-items: center; justify-content: space-between; height: 5px; flex: none; padding: 0 7px 0 2px; background: #fbfbfb; }
.hthumb { width: 43%; height: 3px; border-radius: 2px; background: #a5a5a5; }
.hgrip { width: 2px; height: 5px; background: #777; }
.tabs { display: flex; align-items: center; height: 13px; flex: none; padding-left: 3px; }
.tabnav { width: 12px; }
.tabnav svg, .addtab svg { width: 9px; height: 9px; margin: auto; fill: none; stroke: #c6c6c6; }
.addtab { width: 20px; }
.tab { height: 13px; padding: 0 6px; border-bottom: 2px solid #333; background: #fff; font-weight: 700; color: #222; }

.sidebar { position: relative; display: flex; flex-direction: column; align-items: center; gap: 12px; width: 32px; flex: none; padding-top: 6px; border-left: 1px solid #ccc; }
.sidebar svg { width: 12px; height: 12px; }
.side-grip { position: absolute; left: -1px; top: 46%; width: 4px; height: 39px; background: #333; }
.sidebar .side-grip svg { width: 3px; height: 4px; }

.status { display: flex; align-items: center; height: 12px; flex: none; border-top: 1px solid #ccc; background: #f2f2f2; font-size: 6px; }
.status svg { height: 10px; }
.st-save { width: 20px; padding-left: 4px; }
.st-sheet { flex: 152; }
.st-selected { flex: 198; }
.st-style { flex: 180; }
.st-lang { flex: 148; }
.st-mode { flex: 90; }
.st-mode svg { width: 16px; }
.st-sum { flex: 138; }
.st-zoom { display: flex; align-items: center; gap: 2px; width: 70px; margin-right: 6px; font-weight: 700; font-size: 8px; }
.st-zoom input { flex: 1; min-width: 0; height: 7px; margin: 0; appearance: none; background: linear-gradient(#777, #777) center / 100% 1px no-repeat; }
.st-zoom input::-webkit-slider-thumb { appearance: none; width: 3px; height: 6px; border: 1px solid #555; border-radius: 1px; background: #eee; }
.st-percent { width: 22px; font-size: 7px; }

.taskbar { display: flex; height: 22px; flex: none; background: #1b1b1b; }
.start { width: 23px; margin-right: 8px; }
.start svg { width: 18px; height: 18px; margin: auto; }
.task { position: relative; width: 21px; margin-right: 3px; border-bottom: 1px solid #2c9bda; }
.task svg { width: 16px; height: 16px; margin: auto; }
.current { background: #5a5a5a; }
.badge { position: absolute; top: 0; left: 0; width: 8px; height: 8px; border-radius: 4px; background: #1f9ede; color: #fff; font-size: 6px; line-height: 8px; }
.tray { display: flex; align-items: center; gap: 4px; margin-left: auto; padding-right: 8px; color: #eee; }
.tray svg { width: 10px; height: 10px; }
.tray time { font-size: 7px; }
```
